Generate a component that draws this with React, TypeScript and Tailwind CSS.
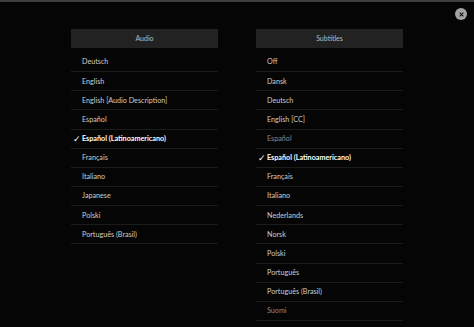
import React from 'react';

interface Track {
    label: string;
    selected?: boolean;
    dim?: boolean;
}

const audioTracks: Track[] = [
    { label: 'Deutsch' },
    { label: 'English' },
    { label: 'English [Audio Description]' },
    { label: 'Español' },
    { label: 'Español (Latinoamericano)', selected: true },
    { label: 'Français' },
    { label: 'Italiano' },
    { label: 'Japanese' },
    { label: 'Polski' },
    { label: 'Português (Brasil)' },
];

const subtitleTracks: Track[] = [
    { label: 'Off' },
    { label: 'Dansk' },
    { label: 'Deutsch' },
    { label: 'English [CC]' },
    { label: 'Español', dim: true },
    { label: 'Español (Latinoamericano)', selected: true },
    { label: 'Français' },
    { label: 'Italiano' },
    { label: 'Nederlands' },
    { label: 'Norsk' },
    { label: 'Polski' },
    { label: 'Português' },
    { label: 'Português (Brasil)' },
    { label: 'Suomi', dim: true },
];

const TrackList: React.FC<{ title: string; tracks: Track[] }> = ({ title, tracks }) => (
    <div className="w-[147px] flex flex-col">
        <div className="h-[19px] bg-[#222222] flex items-center justify-center text-[7px] text-[#bdbdbd]">
            {title}
        </div>
        <ul className="mt-[5px]">
            {tracks.map(t => (
                <li
                    key={t.label}
                    className="relative h-[19.15px] flex items-center pl-[11px] border-b border-[#1b1b1b]"
                >
                    {t.selected && (
                        <span className="absolute left-[2px] text-[9px] text-white leading-none">✓</span>
                    )}
                    <span
                        className={`text-[7.2px] leading-none ${
                            t.selected
                                ? 'font-bold text-white'
                                : t.dim
                                ? 'text-[#8a8a8a]'
                                : 'text-[#cccccc]'
                        }`}
                    >
                        {t.label}
                    </span>
                </li>
            ))}
        </ul>
    </div>
);

export default function App() {
    return (
        <div
            className="relative w-[474px] h-[327px] overflow-hidden bg-[#050505] border-t-2 border-[#3d3d3d]"
            style={{ fontFamily: 'Lato, "Noto Sans", sans-serif' }}
        >
            <button className="absolute top-[6px] right-[7px] w-[12px] h-[12px] rounded-full bg-[#a3a3a3] flex items-center justify-center">
                <svg width="5" height="5" viewBox="0 0 10 10">
                    <path d="M2 2 L8 8 M8 2 L2 8" stroke="#1a1a1a" strokeWidth="2.2" strokeLinecap="round" />
                </svg>
            </button>
            <div className="flex justify-center gap-[38px] pt-[27px]">
                <TrackList title="Audio" tracks={audioTracks} />
                <TrackList title="Subtitles" tracks={subtitleTracks} />
            </div>
        </div>
    );
}
